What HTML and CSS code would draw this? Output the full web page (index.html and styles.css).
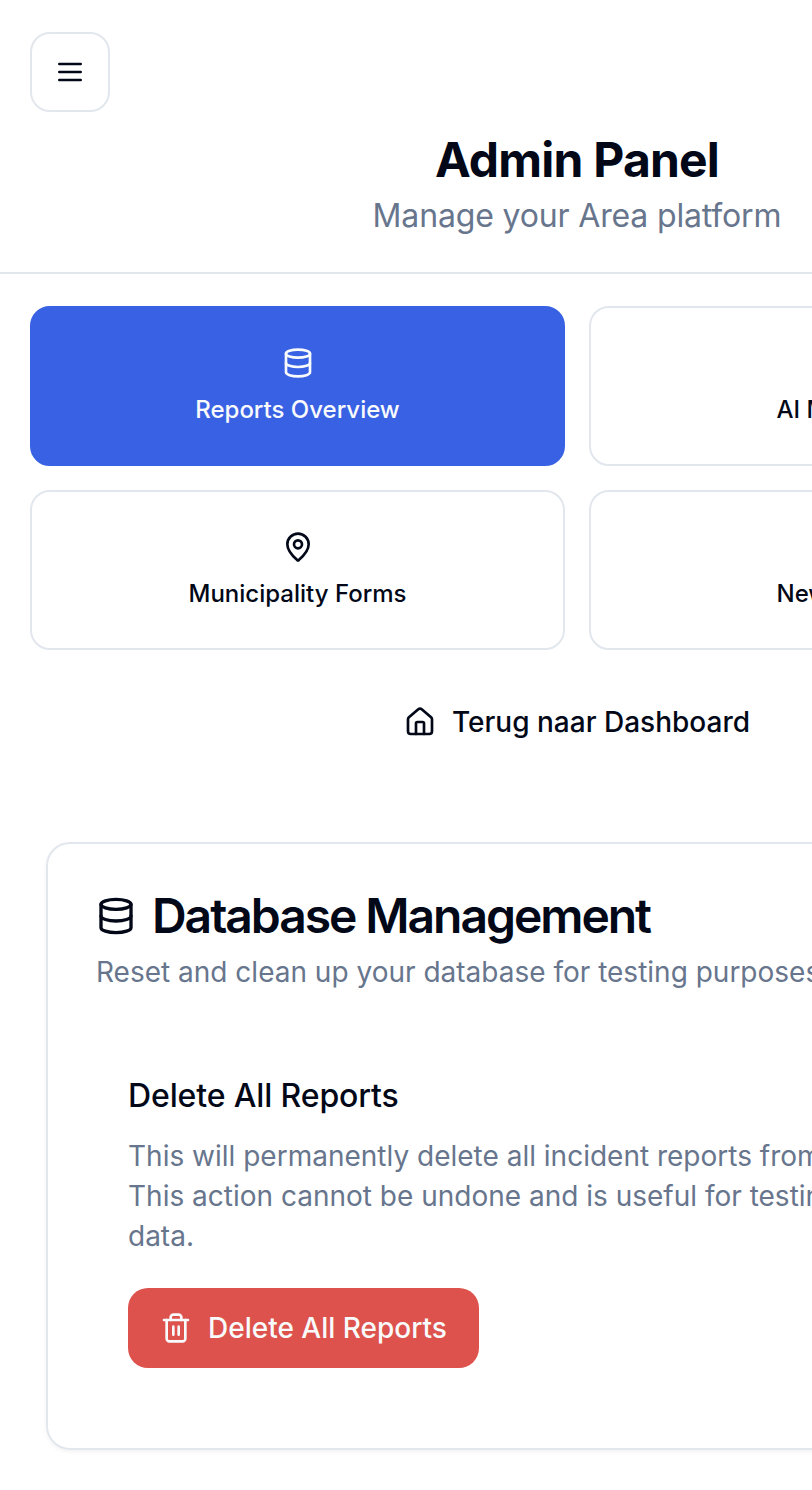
FILE: index.html
```html
<!DOCTYPE html>
<html lang="en">
<head>
<meta charset="utf-8">
<title>Admin Panel</title>
<link rel="stylesheet" href="styles.css">
</head>
<body>
<svg width="0" height="0" class="sprite" aria-hidden="true">
  <symbol id="database" viewBox="0 0 24 24"><ellipse cx="12" cy="5" rx="9" ry="3"/><path d="M3 5V19A9 3 0 0 0 21 19V5"/><path d="M3 12A9 3 0 0 0 21 12"/></symbol>
  <symbol id="pin" viewBox="0 0 24 24"><path d="M20 10c0 4.993-5.539 10.193-7.399 11.799a1 1 0 0 1-1.202 0C9.539 20.193 4 14.993 4 10a8 8 0 0 1 16 0"/><circle cx="12" cy="10" r="3"/></symbol>
  <symbol id="house" viewBox="0 0 24 24"><path d="M15 21v-8a1 1 0 0 0-1-1h-4a1 1 0 0 0-1 1v8"/><path d="M3 10a2 2 0 0 1 .709-1.528l7-5.999a2 2 0 0 1 2.582 0l7 5.999A2 2 0 0 1 21 10v9a2 2 0 0 1-2 2H5a2 2 0 0 1-2-2z"/></symbol>
  <symbol id="menu" viewBox="0 0 24 24"><path d="M4 6h16M4 12h16M4 18h16"/></symbol>
  <symbol id="trash" viewBox="0 0 24 24"><path d="M3 6h18"/><path d="M19 6v14c0 1-1 2-2 2H7c-1 0-2-1-2-2V6"/><path d="M8 6V4c0-1 1-2 2-2h4c1 0 2 1 2 2v2"/><path d="M10 11v6M14 11v6"/></symbol>
</svg>
<div class="page">
  <header class="header">
    <button class="menu-button" aria-label="Menu"><svg class="icon"><use href="#menu"/></svg></button>
    <div class="heading">
      <h1 class="title">Admin Panel</h1>
      <p class="subtitle">Manage your Area platform</p>
    </div>
  </header>
  <nav class="nav">
    <div class="tabs">
      <button class="tab tab-active"><svg class="icon"><use href="#database"/></svg><span>Reports Overview</span></button>
      <button class="tab"><svg class="icon"><use href="#database"/></svg><span class="tab-label">AI Monitoring</span></button>
      <button class="tab"><svg class="icon"><use href="#pin"/></svg><span>Municipality Forms</span></button>
      <button class="tab"><svg class="icon"><use href="#database"/></svg><span class="tab-label">News Articles</span></button>
    </div>
    <a class="back"><svg class="icon"><use href="#house"/></svg><span>Terug naar Dashboard</span></a>
  </nav>
  <main class="main">
    <section class="card">
      <h2 class="card-title"><svg class="icon icon-large"><use href="#database"/></svg><span>Database Management</span></h2>
      <p class="card-description">Reset and clean up your database for testing purposes</p>
      <div class="action">
        <h3 class="action-title">Delete All Reports</h3>
        <p class="action-text">This will permanently delete all incident reports from the database.<br>This action cannot be undone and is useful for testing with clean<br>data.</p>
        <button class="delete"><svg class="icon"><use href="#trash"/></svg><span>Delete All Reports</span></button>
      </div>
    </section>
  </main>
</div>
</body>
</html>
```
FILE: styles.css
```css
* { box-sizing: border-box; margin: 0; }
html, body { overflow: hidden; }
body {
  height: 1490px;
  background: #fff;
  color: #020817;
  font-family: Inter, "Liberation Sans", sans-serif;
  font-optical-sizing: none;
  font-variation-settings: "opsz" 14;
  white-space: nowrap;
}
button { font: inherit; font-variation-settings: inherit; color: inherit; padding: 0; }
.sprite { position: absolute; }
.page { width: 1154px; }
.icon {
  width: 32px; height: 32px; flex: none;
  fill: none; stroke: currentColor; stroke-width: 2;
  stroke-linecap: round; stroke-linejoin: round;
}
.icon-large { width: 40px; height: 40px; }
.header {
  display: flex; flex-direction: column; gap: 16px;
  padding: 32px 30px; height: 274px;
  border-bottom: 2px solid #e2e7ed;
}
.menu-button {
  display: flex; align-items: center; justify-content: center;
  width: 80px; height: 80px;
  border: 2px solid #e2e7ed; border-radius: 20px; background: #fff;
}
.heading { text-align: center; }
.title { font-size: 48px; line-height: 64px; font-weight: 700; letter-spacing: -0.8px; }
.subtitle { font-size: 32px; line-height: 48px; letter-spacing: -0.16px; color: #67758d; }
.nav { display: flex; flex-direction: column; align-items: center; gap: 32px; padding: 32px 30px; }
.tabs { display: grid; grid-template-columns: 1fr 1fr; gap: 24px; width: 100%; }
.tab {
  display: flex; flex-direction: column; align-items: center; justify-content: center; gap: 15px;
  height: 160px; border: 2px solid #e2e7ed; border-radius: 20px; background: #fff;
  font-size: 24px; line-height: 32px; font-weight: 500;
}
.tab-active { background: #3862e3; border-color: #3862e3; color: #f8fafc; }
.tab-label { width: 160px; text-align: left; }
.back {
  display: flex; align-items: center; gap: 16px; height: 80px;
  font-size: 28px; line-height: 40px; font-weight: 500;
}
.main { padding: 48px 46px; }
.card {
  height: 608px; padding: 48px;
  border: 2px solid #e2e7ed; border-radius: 24px;
  box-shadow: 0 2px 4px rgba(0, 0, 0, .05);
}
.card-title {
  display: flex; align-items: center; gap: 16px;
  font-size: 48px; line-height: 48px; font-weight: 600; letter-spacing: -2.05px;
}
.card-description { margin-top: 12px; font-size: 28px; line-height: 40px; color: #67758d; }
.action { display: flex; flex-direction: column; align-items: flex-start; padding: 80px 32px 32px; }
.action-title { font-size: 32px; line-height: 48px; font-weight: 500; letter-spacing: -0.13px; }
.action-text { margin-top: 16px; font-size: 28px; line-height: 40px; color: #67758d; }
.delete {
  display: flex; align-items: center; gap: 16px;
  height: 80px; margin-top: 32px; padding: 0 32px;
  border: 0; border-radius: 20px; background: #dd524c; color: #f8fafc;
  font-size: 28px; line-height: 40px; font-weight: 500;
}
```
